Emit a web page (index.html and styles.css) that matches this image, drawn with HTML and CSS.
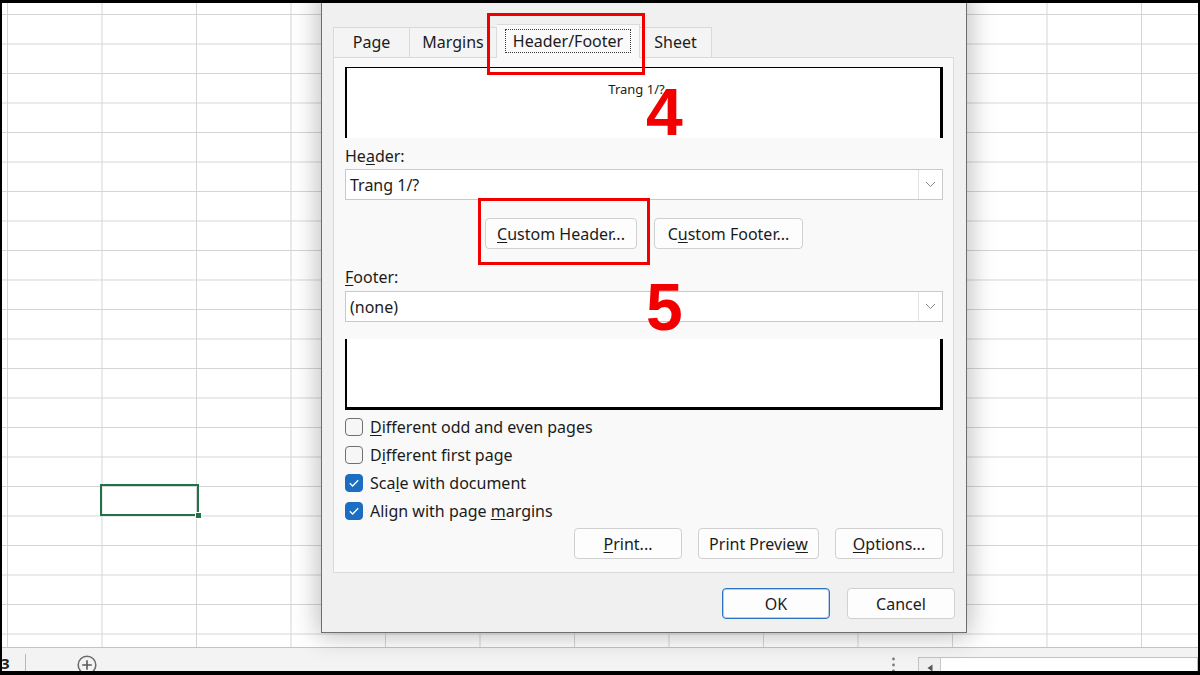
FILE: index.html
```html
<!DOCTYPE html>
<html>
<head>
<meta charset="utf-8">
<link rel="stylesheet" href="styles.css">
</head>
<body>
<div class="frame">
  <div class="sheet">
    <div class="cell-selected"><span class="cell-handle"></span></div>
  </div>
  <div class="tabbar">
    <span class="sheet-name">3</span>
    <span class="tabbar-sep"></span>
    <svg class="add-sheet" width="20" height="20" viewBox="0 0 20 20"><circle cx="10" cy="10" r="8.8" fill="none" stroke="#6a6a6a" stroke-width="1.5"/><path d="M10 5.2v9.6M5.2 10h9.6" stroke="#5a5a5a" stroke-width="1.6"/></svg>
    <svg class="more-dots" width="5" height="18" viewBox="0 0 5 18"><circle cx="2.5" cy="5" r="1.4" fill="#7a7a7a"/><circle cx="2.5" cy="11" r="1.4" fill="#7a7a7a"/><circle cx="2.5" cy="17" r="1.4" fill="#7a7a7a"/></svg>
    <div class="hscroll">
      <span class="hscroll-arrow"><svg width="6" height="8" viewBox="0 0 6 8"><path d="M5.5 0.5v7L0.5 4z" fill="#555"/></svg></span>
      <span class="hscroll-track"></span>
    </div>
  </div>

  <div class="dialog">
    <div class="tabs">
      <div class="tab tab-page">Page</div>
      <div class="tab tab-margins">Margins</div>
      <div class="tab tab-hf"><span class="focus">Header/Footer</span></div>
      <div class="tab tab-sheet">Sheet</div>
    </div>
    <div class="panel">
      <div class="preview preview-head"><span class="preview-text">Trang 1/?</span></div>
      <div class="field-label">He<u>a</u>der:</div>
      <div class="select">
        <span class="select-value">Trang 1/?</span>
        <span class="select-btn"><svg width="11" height="7" viewBox="0 0 11 7"><polyline points="1,1 5.5,5.5 10,1" fill="none" stroke="#8a8a8a" stroke-width="1"/></svg></span>
      </div>
      <div class="btn-row-center">
        <div class="btn w-ch"><u>C</u>ustom Header...</div>
        <div class="btn w-cf">C<u>u</u>stom Footer...</div>
      </div>
      <div class="field-label field-label-footer"><u>F</u>ooter:</div>
      <div class="select">
        <span class="select-value">(none)</span>
        <span class="select-btn"><svg width="11" height="7" viewBox="0 0 11 7"><polyline points="1,1 5.5,5.5 10,1" fill="none" stroke="#8a8a8a" stroke-width="1"/></svg></span>
      </div>
      <div class="preview preview-foot"></div>
      <div class="checks">
        <div class="check"><span class="box"></span><span><u>D</u>ifferent odd and even pages</span></div>
        <div class="check"><span class="box"></span><span>D<u>i</u>fferent first page</span></div>
        <div class="check"><span class="box on"><svg width="12" height="10" viewBox="0 0 12 10"><polyline points="1.8,5.2 4.6,8 10.2,2.2" fill="none" stroke="#fff" stroke-width="1.3"/></svg></span><span>Sca<u>l</u>e with document</span></div>
        <div class="check"><span class="box on"><svg width="12" height="10" viewBox="0 0 12 10"><polyline points="1.8,5.2 4.6,8 10.2,2.2" fill="none" stroke="#fff" stroke-width="1.3"/></svg></span><span>Align with page <u>m</u>argins</span></div>
      </div>
      <div class="btn-row-right">
        <div class="btn w-108"><u>P</u>rint...</div>
        <div class="btn w-121">Print Previe<u>w</u></div>
        <div class="btn w-108"><u>O</u>ptions...</div>
      </div>
    </div>
    <div class="actions">
      <div class="btn btn-primary w-108">OK</div>
      <div class="btn w-108">Cancel</div>
    </div>
  </div>

  <div class="mark mark-tab"></div>
  <div class="mark mark-btn"></div>
  <div class="num num-4">4</div>
  <div class="num num-5">5</div>
</div>
</body>
</html>
```
FILE: styles.css
```css
* { box-sizing: border-box; }
html, body { margin: 0; padding: 0; }
body {
  width: 1200px;
  height: 675px;
  background: #000;
  overflow: hidden;
  font-family: "Noto Sans", "Open Sans", sans-serif;
}
u { text-decoration: underline; text-underline-offset: 2px; text-decoration-thickness: 1px; }

.frame {
  position: relative;
  margin: 3px 2px 0 2px;
  width: 1196px;
  height: 668px;
  background: #fff;
  overflow: hidden;
  display: flex;
  flex-direction: column;
}

.sheet {
  position: relative;
  height: 644px;
  flex: none;
  background-color: #fff;
  background-image:
    linear-gradient(to right, #d5d5d5 1px, transparent 1px),
    linear-gradient(to bottom, #d5d5d5 1px, transparent 1px);
  background-size: 94.5px 100%, 100% 29.5px;
  background-position: 5px 0, 0 11px;
}
.cell-selected {
  position: absolute;
  left: 98px;
  top: 481px;
  width: 99px;
  height: 32px;
  border: 2px solid #217346;
}
.cell-handle {
  position: absolute;
  right: -5px;
  bottom: -5px;
  width: 7px;
  height: 7px;
  background: #217346;
  border: 1px solid #fff;
}

.tabbar {
  flex: 1;
  border-top: 1px solid #c4c4c4;
  background: #f3f3f3;
  display: flex;
  align-items: flex-start;
}
.sheet-name {
  width: 10px;
  margin-left: -1px;
  margin-top: 5px;
  font-weight: bold;
  font-size: 15px;
  line-height: 20px;
  color: #222;
}
.tabbar-sep {
  width: 1px;
  height: 18px;
  margin-top: 6px;
  margin-left: 14px;
  background: #b8b8b8;
}
.add-sheet { margin-left: 51px; margin-top: 7px; flex: none; }
.more-dots { margin-left: auto; margin-top: 6px; flex: none; }
.hscroll {
  margin-left: 22px;
  margin-top: 9px;
  width: 280px;
  height: 18px;
  display: flex;
  border: 1px solid #c2c2c2;
  background: #fff;
  flex: none;
}
.hscroll-arrow {
  width: 22px;
  background: #efefef;
  border-right: 1px solid #c8c8c8;
  display: flex;
  justify-content: center;
  padding-top: 6px;
}
.hscroll-track { flex: 1; }

/* dialog */
.dialog {
  position: absolute;
  left: 319px;
  top: -10px;
  width: 646px;
  background: #f0f0f0;
  border: 1px solid #6e6e6e;
  box-shadow: 0 0 24px 3px rgba(0, 0, 0, 0.26);
  padding: 0 11px 13px 11px;
  color: #1b1b1b;
  font-size: 16px;
  z-index: 2;
}
.tabs {
  display: flex;
  align-items: flex-end;
  height: 33px;
  margin-top: 30px;
  position: relative;
  z-index: 1;
}
.tab {
  height: 30px;
  border: 1px solid #dadada;
  border-bottom: none;
  background: #f4f4f4;
  display: flex;
  align-items: center;
  justify-content: center;
  line-height: 20px;
  padding-bottom: 1px;
}
.tab + .tab { border-left: none; }
.tab-page { width: 77px; }
.tab-margins { width: 87px; }
.tab-hf {
  width: 143px;
  height: 34px;
  margin-bottom: -1px;
  background: #f9f9f9;
  border-left: 1px solid #dadada;
  padding-bottom: 2px;
}
.tab-hf + .tab { border-left: none; }
.tab-sheet { width: 72px; }
.focus {
  border: 1px dotted #3a3a3a;
  padding: 1px 7px;
}

.panel {
  background: #f9f9f9;
  border: 1px solid #dadada;
  margin-right: 1px;
  padding: 9px 10px 13px 11px;
}
.preview { height: 71px; background: #fff; }
.preview-head {
  border-top: 1px solid #000;
  border-left: 2px solid #000;
  border-right: 3px solid #000;
  padding-top: 12px;
  padding-right: 14px;
  text-align: center;
  font-size: 13px;
  line-height: 18px;
}
.preview-foot {
  margin-top: 17px;
  border-left: 2px solid #000;
  border-right: 3px solid #000;
  border-bottom: 3px solid #000;
}
.field-label { line-height: 20px; margin: 8px 0 3px; }
.field-label-footer { margin: 18px 0 4px; }

.select {
  height: 31px;
  background: #fff;
  border: 1px solid #c9c9c9;
  display: flex;
  align-items: center;
}
.select-value { flex: 1; padding-left: 4px; line-height: 20px; }
.select-btn {
  width: 24px;
  height: 100%;
  border-left: 1px solid #e2e2e2;
  display: flex;
  align-items: center;
  justify-content: center;
}

.btn {
  height: 31px;
  background: #fdfdfd;
  border: 1px solid #d0d0d0;
  border-radius: 4px;
  display: flex;
  align-items: center;
  justify-content: center;
  line-height: 20px;
  flex: none;
}
.btn-primary {
  border-color: #2c74c2;
  box-shadow: inset 0 0 0 1px rgba(44, 116, 194, 0.35);
}
.w-ch { width: 152px; }
.w-cf { width: 149px; }
.w-108 { width: 108px; }
.w-121 { width: 121px; }

.btn-row-center {
  display: flex;
  justify-content: center;
  gap: 17px;
  margin-top: 18px;
}
.checks { margin-top: 3px; }
.check {
  height: 28px;
  display: flex;
  align-items: center;
  gap: 7px;
  line-height: 20px;
}
.box {
  width: 18px;
  height: 18px;
  border: 1px solid #707070;
  border-radius: 4px;
  background: #f6f6f6;
  display: flex;
  align-items: center;
  justify-content: center;
  flex: none;
}
.box.on { background: #1b6ec2; border-color: #1b6ec2; }
.btn-row-right {
  display: flex;
  justify-content: flex-end;
  gap: 16px;
  margin-top: 3px;
}
.actions {
  display: flex;
  justify-content: flex-end;
  gap: 17px;
  margin-top: 15px;
}

/* annotations */
.mark {
  position: absolute;
  border: 3px solid #f20000;
  z-index: 5;
}
.mark-tab { left: 485px; top: 10px; width: 158px; height: 62px; }
.mark-btn { left: 476px; top: 195px; width: 172px; height: 67px; }
.num {
  position: absolute;
  z-index: 5;
  font-family: "Liberation Sans", Arial, sans-serif;
  font-weight: bold;
  font-size: 66px;
  line-height: 66px;
  color: #f20000;
}
.num-4 { left: 644px; top: 76px; }
.num-5 { left: 644px; top: 271px; }
```
